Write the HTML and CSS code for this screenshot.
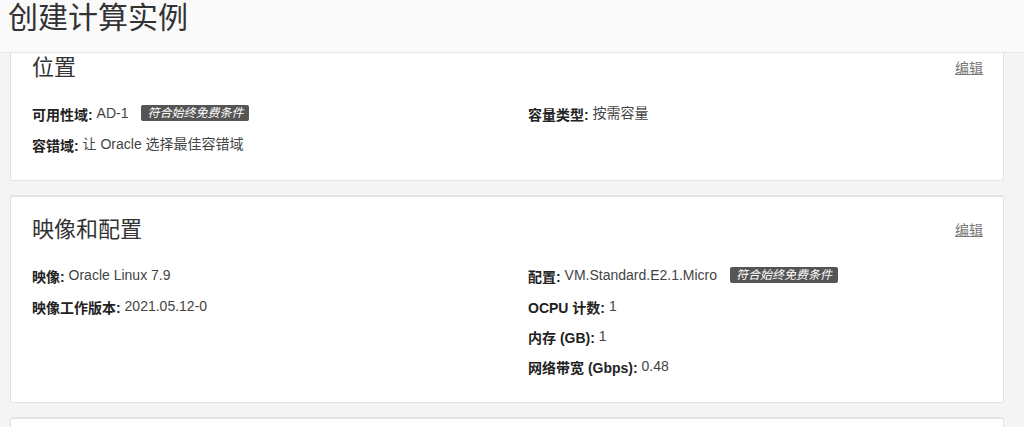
FILE: index.html
```html
<!DOCTYPE html>
<html lang="zh-CN">
<head>
    <meta charset="UTF-8">
    <meta name="viewport" content="width=device-width, initial-scale=1.0">
    <title>创建计算实例</title>
    <link rel="stylesheet" href="styles.css">
</head>
<body>

    <div class="page-header">
        <h1>创建计算实例</h1>
    </div>

    <div class="content">
        <div class="card">
            <div class="card-head">
                <h2>位置</h2>
                <a href="#" class="edit">编辑</a>
            </div>
            <div class="cols">
                <div class="col">
                    <div class="row tall"><span class="lbl">可用性域:</span> <span class="val">AD-1</span><span class="badge">符合始终免费条件</span></div>
                    <div class="row"><span class="lbl">容错域:</span> <span class="val">让 Oracle 选择最佳容错域</span></div>
                </div>
                <div class="col">
                    <div class="row tall"><span class="lbl">容量类型:</span> <span class="val">按需容量</span></div>
                </div>
            </div>
        </div>

        <div class="card">
            <div class="card-head">
                <h2>映像和配置</h2>
                <a href="#" class="edit">编辑</a>
            </div>
            <div class="cols">
                <div class="col">
                    <div class="row tall"><span class="lbl">映像:</span> <span class="val">Oracle Linux 7.9</span></div>
                    <div class="row"><span class="lbl">映像工作版本:</span> <span class="val">2021.05.12-0</span></div>
                </div>
                <div class="col">
                    <div class="row tall"><span class="lbl">配置:</span> <span class="val">VM.Standard.E2.1.Micro</span><span class="badge">符合始终免费条件</span></div>
                    <div class="row"><span class="lbl">OCPU 计数:</span> <span class="val">1</span></div>
                    <div class="row"><span class="lbl">内存 (GB):</span> <span class="val">1</span></div>
                    <div class="row"><span class="lbl">网络带宽 (Gbps):</span> <span class="val">0.48</span></div>
                </div>
            </div>
        </div>

        <!-- next section, scrolled below the fold -->
        <div class="card card-empty"></div>
    </div>

</body>
</html>
```

FILE: styles.css
```css
body {
    font-family: "Liberation Sans", "Noto Sans CJK SC", sans-serif;
    margin: 0;
    padding: 0;
    background-color: #f4f4f4;
    color: #333;
    overflow: hidden;
}

.page-header {
    position: sticky;
    top: 0;
    z-index: 1;
    height: 52px;
    background-color: #fafafa;
    border-bottom: 1px solid #e6e6e6;
}

.page-header h1 {
    margin: 0;
    padding-left: 8px;
    font-size: 30px;
    font-weight: normal;
    line-height: 36px;
    color: #333;
}

.content {
    margin-top: -20px;
    padding: 0 20px 0 10px;
}

.card {
    background-color: #fff;
    border: 1px solid #e2e2e2;
    border-top: 2px solid #e4e4e8;
    border-radius: 3px;
    padding: 20px 20px 21px 21px;
    margin-bottom: 14px;
}

.card-empty {
    height: 60px;
}

.card-head {
    display: flex;
    justify-content: space-between;
    align-items: flex-start;
}

.card-head h2 {
    margin: 0;
    font-size: 22px;
    font-weight: normal;
    line-height: 26px;
    color: #333;
}

.edit {
    font-size: 14px;
    color: #777;
    text-decoration: underline;
    line-height: 18px;
    margin-top: 4px;
}

.cols {
    display: grid;
    grid-template-columns: 1fr 1fr;
    column-gap: 41px;
    margin-top: 16px;
}

.row {
    font-size: 14px;
    line-height: 30px;
    height: 30px;
}

.row.tall {
    height: 32px;
    line-height: 32px;
}

.lbl {
    font-weight: bold;
    color: #222;
}

.val {
    color: #444;
    vertical-align: 2px;
}

.badge {
    display: inline-block;
    margin-left: 13px;
    padding: 0 6px;
    background-color: #555;
    color: #fff;
    font-size: 12px;
    font-style: italic;
    line-height: 16px;
    border-radius: 2px;
    vertical-align: 3px;
}
```
